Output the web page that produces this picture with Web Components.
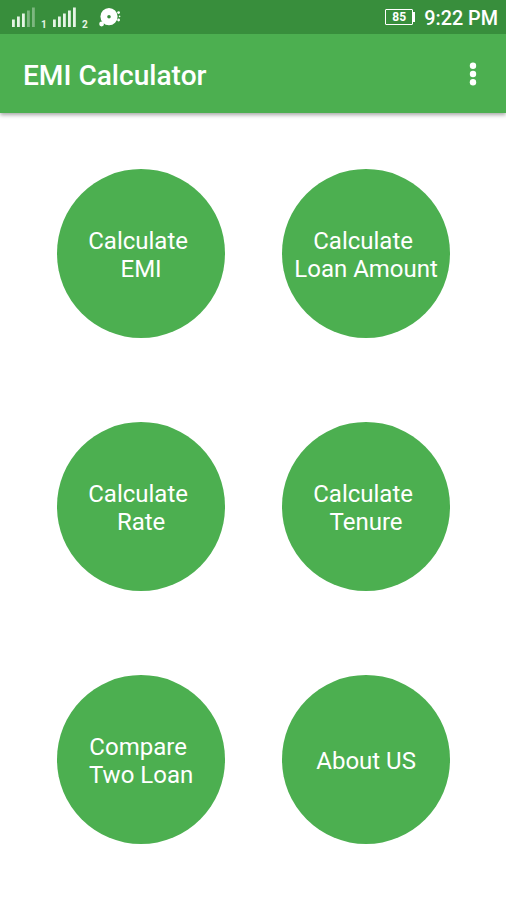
<!DOCTYPE html>
<html lang="en">
<head>
<meta charset="utf-8">
<title>EMI Calculator</title>
<style>
  body {
    margin: 0;
    background: #fff;
    font-family: Roboto, "Liberation Sans", sans-serif;
  }
</style>
</head>
<body>
<emi-app></emi-app>

<script>
const createTemplate = (html) => Object.assign(document.createElement('template'), { innerHTML: html });

class BaseElement extends HTMLElement {
  constructor() {
    super();
    this.attachShadow({ mode: 'open' });
    this.shadowRoot.appendChild(this.constructor.template.content.cloneNode(true));
  }
}

class SignalBars extends BaseElement {
  static template = createTemplate(`
    <style>
      :host {
        display: flex;
        align-items: flex-end;
        color: #e6f5e6;
      }

      svg {
        display: block;
        fill: currentColor;
      }

      .sim {
        width: 6px;
        margin: 0 0 -3px 6px;
        font: 700 10px/10px Roboto, sans-serif;
      }
    </style>
    <svg width="23" height="20" viewBox="0 0 23 20">
      <rect x="0" y="12.5" width="2.8" height="7.5"/>
      <rect x="5" y="9.5" width="2.8" height="10.5"/>
      <rect x="10" y="6.5" width="2.8" height="13.5"/>
      <rect x="15" y="3.5" width="2.8" height="16.5"/>
      <rect x="20" y="0.5" width="2.8" height="19.5"/>
    </svg>
    <span class="sim"><slot></slot></span>
  `);

  connectedCallback() {
    const level = Number(this.getAttribute('level'));

    this.shadowRoot.querySelectorAll('rect').forEach((bar, index) => {
      bar.setAttribute('opacity', index < level ? 1 : 0.4);
    });
  }
}

class BatteryLevel extends BaseElement {
  static template = createTemplate(`
    <style>
      :host {
        display: flex;
        align-items: center;
      }

      .body {
        box-sizing: border-box;
        width: 28px;
        height: 16px;
        border: 1.5px solid #fff;
        border-radius: 1px;
        font: 700 12px/14px Roboto, sans-serif;
        text-align: center;
      }

      .cap {
        width: 2px;
        height: 10px;
        background: #fff;
      }
    </style>
    <div class="body"><slot></slot></div>
    <div class="cap"></div>
  `);
}

class StatusBar extends BaseElement {
  static template = createTemplate(`
    <style>
      :host {
        display: flex;
        align-items: center;
        box-sizing: border-box;
        height: 34px;
        padding: 0 8px 0 12px;
        background: #388e3c;
        color: #fff;
      }

      signal-bars + signal-bars {
        margin-left: 6px;
      }

      .disc {
        display: block;
        margin-left: 11px;
      }

      battery-level {
        margin-left: auto;
      }

      .time {
        margin: 4px 0 0 9px;
        font-size: 19.8px;
        font-weight: 500;
        line-height: 24px;
      }
    </style>
    <signal-bars level="3">1</signal-bars>
    <signal-bars level="5">2</signal-bars>
    <svg class="disc" width="23" height="22" viewBox="0 0 23 22" fill="#fff">
      <path fill-rule="evenodd" d="M10 2a8.6 8.6 0 1 1 0 17.2a8.6 8.6 0 1 1 0-17.2zM10 8.9a1.8 1.8 0 1 0 0 3.6a1.8 1.8 0 1 0 0-3.6z"/>
      <circle cx="2.6" cy="18" r="2.4"/>
      <circle cx="19.6" cy="6.6" r="1.4"/>
      <circle cx="19.6" cy="14" r="1.4"/>
      <circle cx="20.6" cy="10.4" r=".8"/>
    </svg>
    <battery-level>85</battery-level>
    <span class="time">9:22 PM</span>
  `);
}

class AppBar extends BaseElement {
  static template = createTemplate(`
    <style>
      :host {
        display: flex;
        align-items: center;
        justify-content: space-between;
        box-sizing: border-box;
        height: 79px;
        padding: 5px 29px 0 23px;
        background: #4caf50;
        color: #fff;
        box-shadow: 0 2px 4px rgba(0, 0, 0, .35);
      }

      h1 {
        margin: 0;
        font-size: 28.1px;
        font-weight: 500;
        line-height: 34px;
      }

      svg {
        display: block;
        margin-top: -4px;
      }
    </style>
    <h1><slot></slot></h1>
    <svg width="8" height="24" viewBox="0 0 8 24" fill="#fff">
      <circle cx="4" cy="3.7" r="3.2"/>
      <circle cx="4" cy="12" r="3.2"/>
      <circle cx="4" cy="20.3" r="3.2"/>
    </svg>
  `);
}

class RoundButton extends BaseElement {
  static template = createTemplate(`
    <style>
      :host {
        display: block;
      }

      button {
        display: flex;
        align-items: center;
        justify-content: center;
        width: 168.6px;
        height: 169px;
        margin: 0;
        padding: 3px 0 0;
        border: 0;
        border-radius: 50%;
        background: #4caf50;
        color: #fff;
        font: 400 24px/28px Roboto, sans-serif;
        text-align: center;
        white-space: pre;
      }
    </style>
    <button type="button"><span><slot></slot></span></button>
  `);
}

class EmiApp extends BaseElement {
  static template = createTemplate(`
    <style>
      :host {
        display: flex;
        flex-direction: column;
        height: 900px;
        overflow: hidden;
      }

      /* keeps the app bar shadow from spilling upwards */
      status-bar {
        z-index: 1;
      }

      main {
        display: grid;
        grid-template-columns: 169px 169px;
        grid-auto-rows: 169px;
        gap: 84px 56px;
        justify-content: center;
        padding: 56px 0 0 1.6px;
      }
    </style>
    <status-bar></status-bar>
    <app-bar>EMI Calculator</app-bar>
    <main>
      <round-button>Calculate \nEMI</round-button>
      <round-button>Calculate \nLoan Amount</round-button>
      <round-button>Calculate \nRate</round-button>
      <round-button>Calculate \nTenure</round-button>
      <round-button>Compare \nTwo Loan</round-button>
      <round-button>About US</round-button>
    </main>
  `);
}

window.customElements.define('signal-bars', SignalBars);
window.customElements.define('battery-level', BatteryLevel);
window.customElements.define('status-bar', StatusBar);
window.customElements.define('app-bar', AppBar);
window.customElements.define('round-button', RoundButton);
window.customElements.define('emi-app', EmiApp);
</script>
</body>
</html>
